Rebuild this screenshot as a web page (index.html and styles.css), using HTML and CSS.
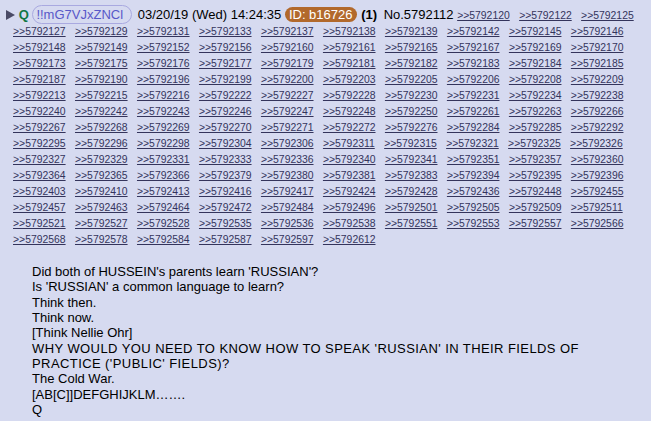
FILE: index.html
```html
<!DOCTYPE html>
<html>
<head>
<meta charset="utf-8">
<link rel="stylesheet" href="styles.css">
</head>
<body>
<div class="post">
  <div class="intro"><svg class="arrow" width="9" height="10" viewBox="0 0 9 10"><polygon points="0,0 9,5 0,10"/></svg> <span class="name">Q</span> <span class="trip">!!mG7VJxZNCl</span> <span class="date">03/20/19 (Wed) 14:24:35</span> <span class="poster-id">ID: b16726</span> <b class="count">(1)</b> <span class="num">No.5792112</span> <span class="backlinks"><a class="backlink" href="#">&gt;&gt;5792120</a> <a class="backlink" href="#">&gt;&gt;5792122</a> <a class="backlink" href="#">&gt;&gt;5792125</a> <a class="backlink" href="#">&gt;&gt;5792127</a> <a class="backlink" href="#">&gt;&gt;5792129</a> <a class="backlink" href="#">&gt;&gt;5792131</a> <a class="backlink" href="#">&gt;&gt;5792133</a> <a class="backlink" href="#">&gt;&gt;5792137</a> <a class="backlink" href="#">&gt;&gt;5792138</a> <a class="backlink" href="#">&gt;&gt;5792139</a> <a class="backlink" href="#">&gt;&gt;5792142</a> <a class="backlink" href="#">&gt;&gt;5792145</a> <a class="backlink" href="#">&gt;&gt;5792146</a> <a class="backlink" href="#">&gt;&gt;5792148</a> <a class="backlink" href="#">&gt;&gt;5792149</a> <a class="backlink" href="#">&gt;&gt;5792152</a> <a class="backlink" href="#">&gt;&gt;5792156</a> <a class="backlink" href="#">&gt;&gt;5792160</a> <a class="backlink" href="#">&gt;&gt;5792161</a> <a class="backlink" href="#">&gt;&gt;5792165</a> <a class="backlink" href="#">&gt;&gt;5792167</a> <a class="backlink" href="#">&gt;&gt;5792169</a> <a class="backlink" href="#">&gt;&gt;5792170</a> <a class="backlink" href="#">&gt;&gt;5792173</a> <a class="backlink" href="#">&gt;&gt;5792175</a> <a class="backlink" href="#">&gt;&gt;5792176</a> <a class="backlink" href="#">&gt;&gt;5792177</a> <a class="backlink" href="#">&gt;&gt;5792179</a> <a class="backlink" href="#">&gt;&gt;5792181</a> <a class="backlink" href="#">&gt;&gt;5792182</a> <a class="backlink" href="#">&gt;&gt;5792183</a> <a class="backlink" href="#">&gt;&gt;5792184</a> <a class="backlink" href="#">&gt;&gt;5792185</a> <a class="backlink" href="#">&gt;&gt;5792187</a> <a class="backlink" href="#">&gt;&gt;5792190</a> <a class="backlink" href="#">&gt;&gt;5792196</a> <a class="backlink" href="#">&gt;&gt;5792199</a> <a class="backlink" href="#">&gt;&gt;5792200</a> <a class="backlink" href="#">&gt;&gt;5792203</a> <a class="backlink" href="#">&gt;&gt;5792205</a> <a class="backlink" href="#">&gt;&gt;5792206</a> <a class="backlink" href="#">&gt;&gt;5792208</a> <a class="backlink" href="#">&gt;&gt;5792209</a> <a class="backlink" href="#">&gt;&gt;5792213</a> <a class="backlink" href="#">&gt;&gt;5792215</a> <a class="backlink" href="#">&gt;&gt;5792216</a> <a class="backlink" href="#">&gt;&gt;5792222</a> <a class="backlink" href="#">&gt;&gt;5792227</a> <a class="backlink" href="#">&gt;&gt;5792228</a> <a class="backlink" href="#">&gt;&gt;5792230</a> <a class="backlink" href="#">&gt;&gt;5792231</a> <a class="backlink" href="#">&gt;&gt;5792234</a> <a class="backlink" href="#">&gt;&gt;5792238</a> <a class="backlink" href="#">&gt;&gt;5792240</a> <a class="backlink" href="#">&gt;&gt;5792242</a> <a class="backlink" href="#">&gt;&gt;5792243</a> <a class="backlink" href="#">&gt;&gt;5792246</a> <a class="backlink" href="#">&gt;&gt;5792247</a> <a class="backlink" href="#">&gt;&gt;5792248</a> <a class="backlink" href="#">&gt;&gt;5792250</a> <a class="backlink" href="#">&gt;&gt;5792261</a> <a class="backlink" href="#">&gt;&gt;5792263</a> <a class="backlink" href="#">&gt;&gt;5792266</a> <a class="backlink" href="#">&gt;&gt;5792267</a> <a class="backlink" href="#">&gt;&gt;5792268</a> <a class="backlink" href="#">&gt;&gt;5792269</a> <a class="backlink" href="#">&gt;&gt;5792270</a> <a class="backlink" href="#">&gt;&gt;5792271</a> <a class="backlink" href="#">&gt;&gt;5792272</a> <a class="backlink" href="#">&gt;&gt;5792276</a> <a class="backlink" href="#">&gt;&gt;5792284</a> <a class="backlink" href="#">&gt;&gt;5792285</a> <a class="backlink" href="#">&gt;&gt;5792292</a> <a class="backlink" href="#">&gt;&gt;5792295</a> <a class="backlink" href="#">&gt;&gt;5792296</a> <a class="backlink" href="#">&gt;&gt;5792298</a> <a class="backlink" href="#">&gt;&gt;5792304</a> <a class="backlink" href="#">&gt;&gt;5792306</a> <a class="backlink" href="#">&gt;&gt;5792311</a> <a class="backlink" href="#">&gt;&gt;5792315</a> <a class="backlink" href="#">&gt;&gt;5792321</a> <a class="backlink" href="#">&gt;&gt;5792325</a> <a class="backlink" href="#">&gt;&gt;5792326</a> <a class="backlink" href="#">&gt;&gt;5792327</a> <a class="backlink" href="#">&gt;&gt;5792329</a> <a class="backlink" href="#">&gt;&gt;5792331</a> <a class="backlink" href="#">&gt;&gt;5792333</a> <a class="backlink" href="#">&gt;&gt;5792336</a> <a class="backlink" href="#">&gt;&gt;5792340</a> <a class="backlink" href="#">&gt;&gt;5792341</a> <a class="backlink" href="#">&gt;&gt;5792351</a> <a class="backlink" href="#">&gt;&gt;5792357</a> <a class="backlink" href="#">&gt;&gt;5792360</a> <a class="backlink" href="#">&gt;&gt;5792364</a> <a class="backlink" href="#">&gt;&gt;5792365</a> <a class="backlink" href="#">&gt;&gt;5792366</a> <a class="backlink" href="#">&gt;&gt;5792379</a> <a class="backlink" href="#">&gt;&gt;5792380</a> <a class="backlink" href="#">&gt;&gt;5792381</a> <a class="backlink" href="#">&gt;&gt;5792383</a> <a class="backlink" href="#">&gt;&gt;5792394</a> <a class="backlink" href="#">&gt;&gt;5792395</a> <a class="backlink" href="#">&gt;&gt;5792396</a> <a class="backlink" href="#">&gt;&gt;5792403</a> <a class="backlink" href="#">&gt;&gt;5792410</a> <a class="backlink" href="#">&gt;&gt;5792413</a> <a class="backlink" href="#">&gt;&gt;5792416</a> <a class="backlink" href="#">&gt;&gt;5792417</a> <a class="backlink" href="#">&gt;&gt;5792424</a> <a class="backlink" href="#">&gt;&gt;5792428</a> <a class="backlink" href="#">&gt;&gt;5792436</a> <a class="backlink" href="#">&gt;&gt;5792448</a> <a class="backlink" href="#">&gt;&gt;5792455</a> <a class="backlink" href="#">&gt;&gt;5792457</a> <a class="backlink" href="#">&gt;&gt;5792463</a> <a class="backlink" href="#">&gt;&gt;5792464</a> <a class="backlink" href="#">&gt;&gt;5792472</a> <a class="backlink" href="#">&gt;&gt;5792484</a> <a class="backlink" href="#">&gt;&gt;5792496</a> <a class="backlink" href="#">&gt;&gt;5792501</a> <a class="backlink" href="#">&gt;&gt;5792505</a> <a class="backlink" href="#">&gt;&gt;5792509</a> <a class="backlink" href="#">&gt;&gt;5792511</a> <a class="backlink" href="#">&gt;&gt;5792521</a> <a class="backlink" href="#">&gt;&gt;5792527</a> <a class="backlink" href="#">&gt;&gt;5792528</a> <a class="backlink" href="#">&gt;&gt;5792535</a> <a class="backlink" href="#">&gt;&gt;5792536</a> <a class="backlink" href="#">&gt;&gt;5792538</a> <a class="backlink" href="#">&gt;&gt;5792551</a> <a class="backlink" href="#">&gt;&gt;5792553</a> <a class="backlink" href="#">&gt;&gt;5792557</a> <a class="backlink" href="#">&gt;&gt;5792566</a> <a class="backlink" href="#">&gt;&gt;5792568</a> <a class="backlink" href="#">&gt;&gt;5792578</a> <a class="backlink" href="#">&gt;&gt;5792584</a> <a class="backlink" href="#">&gt;&gt;5792587</a> <a class="backlink" href="#">&gt;&gt;5792597</a> <a class="backlink" href="#">&gt;&gt;5792612</a></span></div>
  <div class="body">Did both of HUSSEIN's parents learn 'RUSSIAN'?<br>Is 'RUSSIAN' a common language to learn?<br>Think then.<br>Think now.<br>[Think Nellie Ohr]<br><span class="caps">WHY WOULD YOU NEED TO KNOW HOW TO SPEAK 'RUSSIAN' IN THEIR FIELDS OF PRACTICE ('PUBLIC' FIELDS)?</span><br>The Cold War.<br>[AB[C]]DEFGHIJKLM…….<br>Q</div>
</div>
</body>
</html>
```

FILE: styles.css
```css
html, body {
  margin: 0;
  padding: 0;
  background: #d6daf0;
}

body {
  font-family: "Liberation Sans", Arial, sans-serif;
  font-size: 13px;
  color: #000;
}

.post {
  padding: 7px 8px 0 13px;
}

.intro {
  line-height: 16px;
  text-indent: -7px;
}

.arrow {
  fill: #4a4a66;
  vertical-align: -1px;
}

.name {
  color: #117743;
  font-weight: bold;
}

.trip {
  color: #5858c8;
  border: 1px solid #a9a9e0;
  border-radius: 10px;
  padding: 1px 8px 1px 3px;
  margin-right: 2px;
}

.poster-id {
  background: #b2692c;
  color: #fff;
  border-radius: 8px;
  padding: 0 4px;
}

.count {
  margin-left: 1px;
}

.num {
  margin-left: 3px;
}

.backlinks {
  font-size: 10.4px;
  line-height: 10px;
}

.backlink {
  color: #34345c;
  text-decoration: underline;
  margin-right: 6.5px;
}

.body {
  margin-top: 17px;
  padding-left: 19px;
  line-height: 15.33px;
}

.caps {
  letter-spacing: 0.42px;
}
```
